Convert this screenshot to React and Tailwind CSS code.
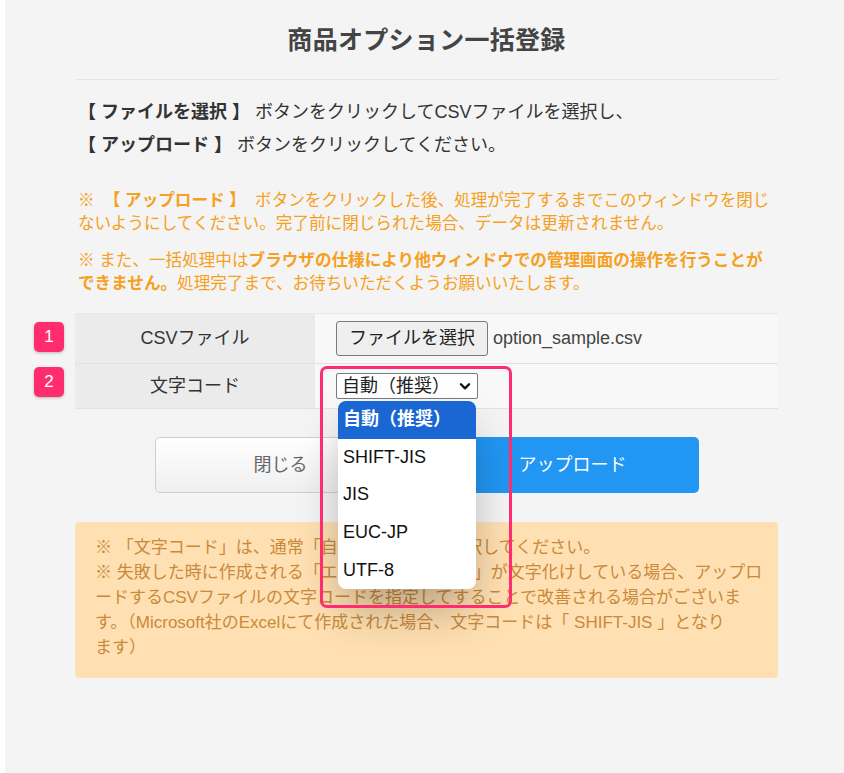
import React from 'react';

const FONT = { fontFamily: '"Liberation Sans", "Noto Sans CJK JP", sans-serif' };

const options = ['自動（推奨）', 'SHIFT-JIS', 'JIS', 'EUC-JP', 'UTF-8'];

function Badge({ n, className }) {
  return (
    <div
      className={`absolute left-[-41px] w-[30px] h-[30px] rounded-[5px] bg-[#ff2d6f] text-white text-[17px] flex items-center justify-center shadow-[0_1px_3px_rgba(0,0,0,0.25)] ${className}`}
    >
      {n}
    </div>
  );
}

export default function App() {
  return (
    <div className="min-h-[773px] bg-white" style={FONT}>
      <div className="ml-[5px] min-h-[773px] bg-[#f4f4f4] pb-[96px]">
        <div className="ml-[70px] w-[703px]">
          {/* タイトル */}
          <div className="h-[80px] flex items-center justify-center border-b border-[#e6e6e6]">
            <h1 className="text-[25px] font-bold text-[#444] leading-[32px] tracking-[0.3px]">
              商品オプション一括登録
            </h1>
          </div>

          {/* 説明 */}
          <p className="mt-[16px] pl-[3px] text-[18px] leading-[33px] text-[#333]">
            <b>【 ファイルを選択 】</b> ボタンをクリックしてCSVファイルを選択し、
            <br />
            <b>【 アップロード 】</b> ボタンをクリックしてください。
          </p>

          <p className="mt-[27px] pl-[3px] text-[16.6px] leading-[23px] text-[#f5a020]">
            ※ <b>&nbsp;【 アップロード 】&nbsp;</b> ボタンをクリックした後、処理が完了するまでこのウィンドウを閉じ
            <br />
            ないようにしてください。完了前に閉じられた場合、データは更新されません。
          </p>
          <p className="mt-[14px] pl-[3px] text-[16.6px] leading-[23px] text-[#f5a020]">
            ※ また、一括処理中は<b>ブラウザの仕様により他ウィンドウでの管理画面の操作を行うことが
            <br />
            できません。</b>処理完了まで、お待ちいただくようお願いいたします。
          </p>

          {/* フォーム */}
          <div className="mt-[18px] border-t border-[#e8e8e8]">
            <div className="relative flex h-[50px] border-b border-[#e2e2e2]">
              <Badge n="1" className="top-[8px]" />
              <div className="w-[240px] bg-[#ebebeb] flex items-center justify-center text-[18px] text-[#333]">
                CSVファイル
              </div>
              <div className="flex-1 bg-[#f8f8f8] flex items-center pl-[21px] gap-[5px]">
                <button className="h-[35px] px-[12px] border border-[#7a7a7a] rounded-[3px] bg-[#efefef] text-[18px] text-[#222]">
                  ファイルを選択
                </button>
                <span className="text-[18px] text-[#444]">option_sample.csv</span>
              </div>
            </div>
            <div className="relative flex h-[45px] border-b border-[#e2e2e2]">
              <Badge n="2" className="top-[3px]" />
              <div className="w-[240px] bg-[#ebebeb] flex items-center justify-center text-[18px] text-[#333]">
                文字コード
              </div>
              <div className="relative flex-1 bg-[#f8f8f8]">
                {/* セレクト */}
                <div className="absolute left-[21px] top-[9px] w-[142px] h-[26px] border border-[#7a7a7a] rounded-[2px] bg-white flex items-center justify-between pl-[5px] pr-[5px] text-[18px] text-[#222]">
                  <span className="leading-[24px]">自動（推奨）</span>
                  <svg width="14" height="14" viewBox="0 0 24 24" fill="none" stroke="#111" strokeWidth="4" strokeLinecap="round" strokeLinejoin="round">
                    <path d="m5 9 7 7 7-7" />
                  </svg>
                </div>
                {/* ドロップダウン */}
                <div className="absolute z-20 left-[23px] top-[37px] w-[138px] rounded-[8px] bg-white overflow-hidden shadow-[0_25px_45px_-5px_rgba(0,0,0,0.28)]">
                  {options.map((o, i) => (
                    <div
                      key={o}
                      className={`h-[37.6px] flex items-center pl-[5px] text-[18px] ${
                        i === 0 ? 'bg-[#1a66d2] text-white font-bold' : 'text-[#111]'
                      }`}
                    >
                      {o}
                    </div>
                  ))}
                </div>
                {/* 強調枠 */}
                <div className="absolute z-30 left-[5px] top-[2px] w-[192px] h-[242px] border-[3px] border-[#ff2d6f] rounded-[7px] pointer-events-none" />
              </div>
            </div>
          </div>

          {/* ボタン */}
          <div className="mt-[28px] flex justify-center gap-[40px]">
            <button className="w-[252px] h-[56px] rounded-[5px] border border-[#cfcfcf] bg-gradient-to-b from-white to-[#efefef] text-[18px] text-[#666]">
              閉じる
            </button>
            <button className="w-[252px] h-[56px] rounded-[5px] bg-[#2196f3] text-[18px] text-white">
              アップロード
            </button>
          </div>

          {/* 注意 */}
          <div className="mt-[29px] h-[156px] rounded-[3px] bg-[#ffe0b2] pl-[20px] pt-[13px] text-[17px] leading-[25px] text-[#c98a3c]">
            ※ 「文字コード」は、通常「自動（推奨）」を選択してください。
            <br />
            ※ 失敗した時に作成される「エラーログファイル」が文字化けしている場合、アップロ
            <br />
            ードするCSVファイルの文字コードを指定してすることで改善される場合がございま
            <br />
            す。（Microsoft社のExcelにて作成された場合、文字コードは「 SHIFT-JIS 」となり
            <br />
            ます）
          </div>
        </div>
      </div>
    </div>
  );
}
